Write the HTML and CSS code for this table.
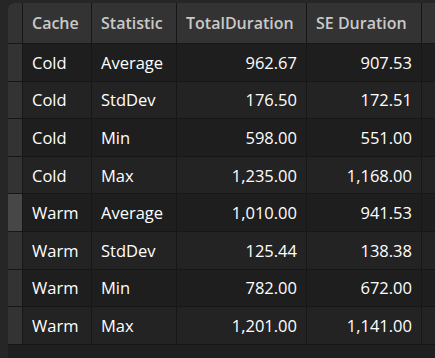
FILE: index.html
```html
<!DOCTYPE html>
<html>
<head>
<meta charset="utf-8">
<link rel="stylesheet" href="styles.css">
</head>
<body>
<div class="panel">
  <div class="grid">
    <div class="rh hdr"></div>
    <div class="hc">Cache</div>
    <div class="hc">Statistic</div>
    <div class="hc">TotalDuration</div>
    <div class="hc">SE Duration</div>
    <div class="hc"></div>

    <div class="rh"></div><div class="c odd">Cold</div><div class="c odd">Average</div><div class="c odd num">962.67</div><div class="c odd num">907.53</div><div class="c odd"></div>
    <div class="rh"></div><div class="c">Cold</div><div class="c">StdDev</div><div class="c num">176.50</div><div class="c num">172.51</div><div class="c"></div>
    <div class="rh"></div><div class="c odd">Cold</div><div class="c odd">Min</div><div class="c odd num">598.00</div><div class="c odd num">551.00</div><div class="c odd"></div>
    <div class="rh"></div><div class="c">Cold</div><div class="c">Max</div><div class="c num">1,235.00</div><div class="c num">1,168.00</div><div class="c"></div>
    <div class="rh sel"></div><div class="c odd">Warm</div><div class="c odd">Average</div><div class="c odd num">1,010.00</div><div class="c odd num">941.53</div><div class="c odd"></div>
    <div class="rh"></div><div class="c">Warm</div><div class="c">StdDev</div><div class="c num">125.44</div><div class="c num">138.38</div><div class="c"></div>
    <div class="rh"></div><div class="c odd">Warm</div><div class="c odd">Min</div><div class="c odd num">782.00</div><div class="c odd num">672.00</div><div class="c odd"></div>
    <div class="rh"></div><div class="c">Warm</div><div class="c">Max</div><div class="c num">1,201.00</div><div class="c num">1,141.00</div><div class="c"></div>
  </div>
</div>
</body>
</html>
```
FILE: styles.css
```css
html, body {
  margin: 0;
  padding: 0;
  background: #262626;
  height: 100%;
  overflow: hidden;
}
body {
  padding: 3px 0 0 8px;
  box-sizing: border-box;
  font-family: "Open Sans", "Noto Sans", sans-serif;
}
.panel {
  background: #1f1f1f;
  border-top-left-radius: 6px;
  overflow: hidden;
  height: 100%;
}
.grid {
  display: grid;
  grid-template-columns: 14px 68px 84px 129px 114px 20px;
  grid-template-rows: 40px repeat(8, 36.6px);
  gap: 1px;
  background: #171717;
  padding-bottom: 1px;
}
.rh {
  background: #333333;
}
.rh.sel {
  background: #474747;
}
.hc {
  background: #333333;
  color: #c9c9c9;
  font-weight: 600;
  font-size: 16px;
  display: flex;
  align-items: center;
  padding: 0 9px;
  white-space: nowrap;
}
.c {
  background: #232323;
  color: #ffffff;
  font-size: 16.5px;
  display: flex;
  align-items: center;
  padding: 0 9px;
  white-space: nowrap;
}
.c.odd {
  background: #1e1e1e;
}
.c.num {
  justify-content: flex-end;
}
```
